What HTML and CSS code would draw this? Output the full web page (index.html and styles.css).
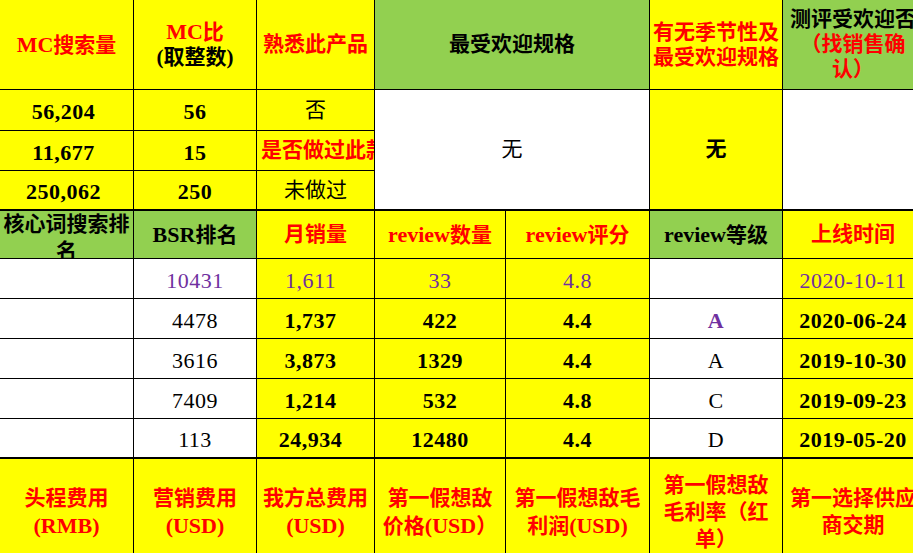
FILE: index.html
```html
<!DOCTYPE html>
<html lang="zh-CN">
<head>
<meta charset="utf-8">
<title>产品调研表</title>
<link rel="stylesheet" href="styles.css">
</head>
<body>
<div class="sheet">
  <div class="sec sec-top">
    <div class="c y r b"><div><span class="en">MC</span>搜索量</div></div>
    <div class="c y b"><div><span class="r"><span class="en">MC</span>比</span><br>(取整数)</div></div>
    <div class="c y r b"><div>熟悉此产品</div></div>
    <div class="c g b span2"><div>最受欢迎规格</div></div>
    <div class="c y r b"><div>有无季节性及<br>最受欢迎规格</div></div>
    <div class="c g b"><div>测评受欢迎否<br><span class="r">（找销售确<br>认）</span></div></div>

    <div class="c y b num shift1"><div>56,204</div></div>
    <div class="c y b num"><div>56</div></div>
    <div class="c y"><div>否</div></div>
    <div class="c w span2 rows3"><div>无</div></div>
    <div class="c y b rows3"><div>无</div></div>
    <div class="c w rows3"></div>

    <div class="c y b num shift1"><div>11,677</div></div>
    <div class="c y b num"><div>15</div></div>
    <div class="c y r b left"><div>是否做过此款</div></div>

    <div class="c y b num shift1"><div>250,062</div></div>
    <div class="c y b num"><div>250</div></div>
    <div class="c y"><div>未做过</div></div>
  </div>
  <div class="thick"></div>
  <div class="sec sec-mid">
    <div class="c g b top"><div>核心词搜索排<br>名</div></div>
    <div class="c g b"><div><span class="en">BSR</span>排名</div></div>
    <div class="c y r b"><div>月销量</div></div>
    <div class="c y r b"><div><span class="en">review</span>数量</div></div>
    <div class="c y r b"><div><span class="en">review</span>评分</div></div>
    <div class="c g b"><div><span class="en">review</span>等级</div></div>
    <div class="c y r b"><div>上线时间</div></div>

    <div class="c w"></div>
    <div class="c w num p"><div>10431</div></div>
    <div class="c y num p shift2"><div>1,611</div></div>
    <div class="c y num p"><div>33</div></div>
    <div class="c y num p"><div>4.8</div></div>
    <div class="c w"></div>
    <div class="c y num p"><div>2020-10-11</div></div>

    <div class="c w"></div>
    <div class="c w num"><div>4478</div></div>
    <div class="c y num b shift2"><div>1,737</div></div>
    <div class="c y num b"><div>422</div></div>
    <div class="c y num b"><div>4.4</div></div>
    <div class="c w num p b"><div>A</div></div>
    <div class="c y num b"><div>2020-06-24</div></div>

    <div class="c w"></div>
    <div class="c w num"><div>3616</div></div>
    <div class="c y num b shift2"><div>3,873</div></div>
    <div class="c y num b"><div>1329</div></div>
    <div class="c y num b"><div>4.4</div></div>
    <div class="c w num"><div>A</div></div>
    <div class="c y num b"><div>2019-10-30</div></div>

    <div class="c w"></div>
    <div class="c w num"><div>7409</div></div>
    <div class="c y num b shift2"><div>1,214</div></div>
    <div class="c y num b"><div>532</div></div>
    <div class="c y num b"><div>4.8</div></div>
    <div class="c w num"><div>C</div></div>
    <div class="c y num b"><div>2019-09-23</div></div>

    <div class="c w"></div>
    <div class="c w num"><div>113</div></div>
    <div class="c y num b shift2"><div>24,934</div></div>
    <div class="c y num b"><div>12480</div></div>
    <div class="c y num b"><div>4.4</div></div>
    <div class="c w num"><div>D</div></div>
    <div class="c y num b"><div>2019-05-20</div></div>
  </div>
  <div class="thick"></div>
  <div class="sec sec-bot">
    <div class="c y r b tall"><div>头程费用<br><span class="en">(RMB)</span></div></div>
    <div class="c y r b tall"><div>营销费用<br><span class="en">(USD)</span></div></div>
    <div class="c y r b tall"><div>我方总费用<br><span class="en">(USD)</span></div></div>
    <div class="c y r b tall"><div>第一假想敌<br>价格<span class="en">(USD</span>）</div></div>
    <div class="c y r b tall"><div>第一假想敌毛<br>利润<span class="en">(USD)</span></div></div>
    <div class="c y r b tall"><div>第一假想敌<br>毛利率（红<br>单）</div></div>
    <div class="c y r b tall"><div>第一选择供应<br>商交期</div></div>
  </div>
</div>
</body>
</html>
```
FILE: styles.css
```css
html, body {
  margin: 0;
  padding: 0;
  overflow: hidden;
  background: #ffffff;
}

.sheet {
  width: 923px;
  font-family: "Liberation Serif", "Noto Sans CJK SC", serif;
  font-size: 21px;
  color: #000000;
}

.sec {
  display: grid;
  grid-template-columns: 133px 122px 117px 130px 143px 132px 140px;
  gap: 1px;
  background: #000000;
}

.sec-top {
  grid-template-rows: 89px 40px 39px 38px;
}

.sec-mid {
  grid-template-rows: 47px 39px 39px 39px 39px 38px;
}

.sec-bot {
  grid-template-rows: 106px;
}

.thick {
  height: 2px;
  background: #000000;
}

.c {
  display: flex;
  align-items: center;
  justify-content: center;
  text-align: center;
  overflow: hidden;
  white-space: nowrap;
  line-height: 25px;
  font-weight: 400;
}

.c > div {
  flex: none;
}

.y { background: #ffff00; }
.g { background: #92d050; }
.w { background: #ffffff; }

.r { color: #ff0000; }
.p { color: #7030a0; }
.b { font-weight: 700; }

.en {
  font-size: 22px;
}

.num {
  font-size: 22px;
  padding-top: 3px;
  letter-spacing: 0.5px;
}

.shift1 { padding-right: 6px; }
.shift2 { padding-right: 10px; }

.left {
  justify-content: flex-start;
  padding-left: 4px;
}

.top {
  align-items: flex-start;
  line-height: 27px;
}

.tall {
  line-height: 27px;
}

.span2 { grid-column: span 2; }
.rows3 { grid-row: span 3; }
```
